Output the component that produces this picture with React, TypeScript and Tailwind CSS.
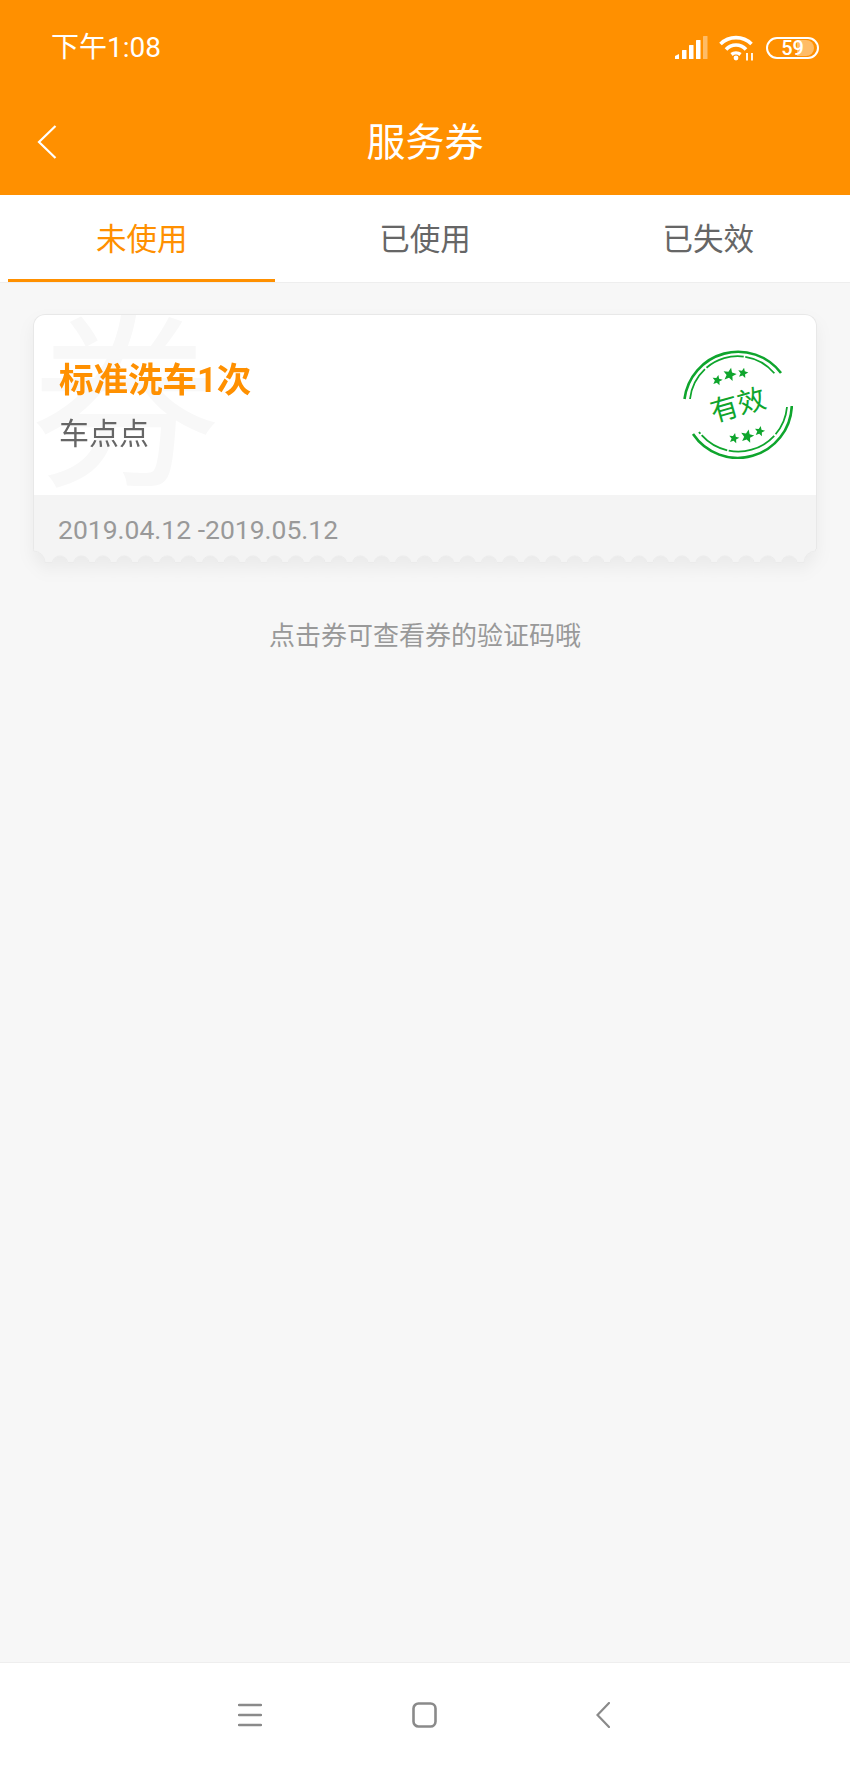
const FONT = "font-['Roboto','Noto_Sans_CJK_SC',sans-serif]";

const tabs = ['未使用', '已使用', '已失效'];

// scalloped lower edge of the ticket
function TicketEdge() {
  const w = 783;
  const y = 13.5;
  let d = `M0.5 0 V2 A11.5 11.5 0 0 1 12 ${y}`;
  for (let i = 0; i < 35; i++) {
    const c = 27 + i * 21.45;
    d += ` H${c - 7.5} A7.5 6.5 0 0 1 ${c + 7.5} ${y}`;
  }
  d += ` H${w - 12} A11.5 11.5 0 0 1 ${w - 0.5} 2 V0`;
  return (
    <svg width={w} height={14} viewBox={`0 0 ${w} 14`} className="block">
      <path d={d} fill="#f4f4f4" stroke="#ebebeb" strokeWidth="1" />
    </svg>
  );
}

function Star({ x, y, r }: { x: number; y: number; r: number }) {
  const pts: string[] = [];
  for (let i = 0; i < 10; i++) {
    const a = -Math.PI / 2 + (i * Math.PI) / 5 + 0.2;
    const rad = i % 2 === 0 ? r : r * 0.45;
    pts.push(`${x + rad * Math.cos(a)},${y + rad * Math.sin(a)}`);
  }
  return <polygon points={pts.join(' ')} fill="#0fa52d" />;
}

function Stamp() {
  return (
    <svg width={110} height={110} viewBox="0 0 110 110" className="shrink-0">
      <g fill="none" stroke="#0fa52d">
        <path d="M1.5 50 A54 54 0 0 1 98 24" strokeWidth="2.6" />
        <path d="M7 50 A48 48 0 0 1 92 25" strokeWidth="1.8" strokeDasharray="34 2 40 1.5" />
        <path d="M108.8 57 A54 54 0 0 1 10 85" strokeWidth="2.6" />
        <path d="M104 58 A49 49 0 0 1 16 83" strokeWidth="1.8" strokeDasharray="30 2 50 1.5" />
      </g>
      <Star x={34.3} y={31.3} r={5.4} />
      <Star x={46.7} y={25.7} r={7} />
      <Star x={60} y={24} r={5.4} />
      <Star x={51} y={89.3} r={5.4} />
      <Star x={64.3} y={87.3} r={7} />
      <Star x={76.7} y={82.3} r={5.4} />
      <text
        x="55"
        y="66"
        textAnchor="middle"
        fontSize="28"
        fill="#0fa52d"
        fontFamily="'Noto Sans CJK SC', sans-serif"
        transform="rotate(-16 55 56)"
      >
        有效
      </text>
    </svg>
  );
}

function SignalIcon() {
  return (
    <svg width={33} height={24} viewBox="0 0 33 24">
      <path d="M0 23 V20 L4 18 V23 Z" fill="#fff" />
      <rect x="7" y="14" width="4.5" height="9" rx="0.5" fill="#fff" />
      <rect x="14" y="9" width="4.5" height="14" rx="0.5" fill="#fff" />
      <rect x="21" y="4" width="4.5" height="19" rx="0.5" fill="#fff" />
      <rect x="28" y="0" width="4.5" height="23" rx="0.5" fill="#fff" opacity="0.4" />
    </svg>
  );
}

function WifiIcon() {
  return (
    <svg width={36} height={26} viewBox="0 0 36 26" fill="none" stroke="#fff" strokeWidth="3.6">
      <path d="M1.5 9 C10 0.5 24 0.5 32.5 9" />
      <path d="M7 14.5 C12.5 8.5 21.5 8.5 27 14.5" />
      <path d="M12.5 19.5 C15 17.5 19 17.5 21.5 19.5" />
      <circle cx="17" cy="23" r="2.4" fill="#fff" stroke="none" />
      <path d="M28 18 V25.5 M33 18 V25.5" strokeWidth="1.8" />
    </svg>
  );
}

function Battery() {
  return (
    <div className="relative flex h-[22px] w-[53px] items-center justify-center overflow-hidden rounded-full border-2 border-white">
      <div className="absolute inset-y-[1px] right-[3px] left-[59%] rounded-r-full bg-white/40" />
      <span className="relative text-[20px] leading-none font-medium text-white">59</span>
    </div>
  );
}

export default function App() {
  return (
    <div className={`flex h-[1766px] w-[850px] flex-col overflow-hidden bg-[#f7f7f7] ${FONT}`}>
      {/* status bar + title */}
      <header className="h-[195px] shrink-0 bg-[#ff9000] text-white">
        <div className="flex h-[94px] items-center justify-between pt-[1px] pr-[31px] pl-[51px]">
          <span className="text-[28px]">下午1:08</span>
          <div className="flex items-center gap-[11px]">
            <SignalIcon />
            <WifiIcon />
            <Battery />
          </div>
        </div>
        <div className="relative flex h-[94px] items-center justify-center pt-[4px]">
          <svg width={20} height={34} viewBox="0 0 20 34" fill="none" stroke="#fff" strokeWidth="2.2" className="absolute top-[31px] left-[37px]">
            <path d="M18.5 1 L2 17 L18.5 33" />
          </svg>
          <span className="text-[39px] leading-none">服务券</span>
        </div>
      </header>

      {/* tabs */}
      <nav className="flex h-[88px] shrink-0 border-b border-[#eeeeee] bg-white">
        {tabs.map((t, i) => (
          <div
            key={t}
            className={`mx-2 flex flex-1 items-center justify-center border-b-[3px] pt-[6px] text-[30.5px] ${
              i === 0 ? 'border-[#ff9000] text-[#ff9000]' : 'border-transparent text-[#666666]'
            }`}
          >
            {t}
          </div>
        ))}
      </nav>

      <main className="flex-1 px-[33px] pt-[31px]">
        <div className="drop-shadow-[0_8px_8px_rgba(0,0,0,0.05)]">
          <div className="relative flex h-[181px] items-center justify-between overflow-hidden rounded-t-[12px] border-x border-t border-[#e8e8e8] bg-white pr-[23px] pl-[25px]">
            <span className="absolute top-[-22px] left-[-4px] text-[190px] leading-[1.2] text-[#f8f8f8]">券</span>
            <div className="relative pt-[3px]">
              <div className="text-[34.5px] leading-[46px] font-bold text-[#ff9000]">标准洗车1次</div>
              <div className="mt-[8px] text-[30px] leading-[46px] text-[#666666]">车点点</div>
            </div>
            <div className="relative mb-[2px]"><Stamp /></div>
          </div>
          <div className="flex h-[54px] items-center border-x border-[#e8e8e8] bg-[#f4f4f4] pt-[15px] pl-[24px] text-[26.5px] text-[#999999]">
            2019.04.12 -2019.05.12
          </div>
          <TicketEdge />
        </div>
        <p className="mt-[53px] text-center text-[26px] leading-[40px] text-[#999999]">点击券可查看券的验证码哦</p>
      </main>

      {/* android nav bar */}
      <footer className="flex h-[104px] shrink-0 items-center gap-[150px] border-t border-[#eeeeee] bg-white pl-[238px]">
        <svg width={24} height={24} viewBox="0 0 24 24" stroke="#8a8a8a" strokeWidth="2.4" strokeLinecap="round">
          <path d="M1 2 H23 M1 12 H23 M1 22 H23" />
        </svg>
        <svg width={25} height={26} viewBox="0 0 25 26" fill="none" stroke="#8a8a8a" strokeWidth="2.6">
          <rect x="1.5" y="1.5" width="22" height="23" rx="5" />
        </svg>
        <svg width={14} height={26} viewBox="0 0 14 26" fill="none" stroke="#8a8a8a" strokeWidth="2.2" strokeLinecap="round" className="ml-[9px]">
          <path d="M13 1 L1.5 13 L13 25" />
        </svg>
      </footer>
    </div>
  );
}
